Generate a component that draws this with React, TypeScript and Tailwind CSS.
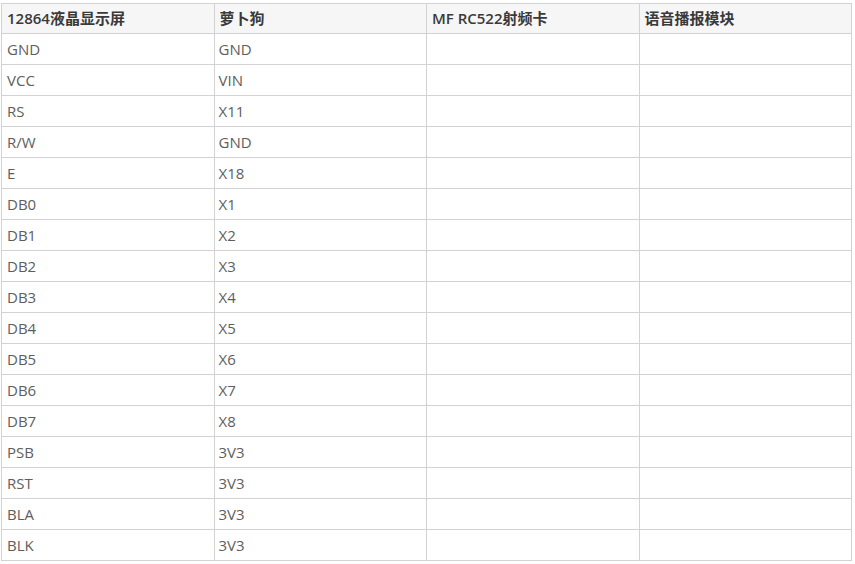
const rows: [string, string][] = [
  ['GND', 'GND'],
  ['VCC', 'VIN'],
  ['RS', 'X11'],
  ['R/W', 'GND'],
  ['E', 'X18'],
  ['DB0', 'X1'],
  ['DB1', 'X2'],
  ['DB2', 'X3'],
  ['DB3', 'X4'],
  ['DB4', 'X5'],
  ['DB5', 'X6'],
  ['DB6', 'X7'],
  ['DB7', 'X8'],
  ['PSB', '3V3'],
  ['RST', '3V3'],
  ['BLA', '3V3'],
  ['BLK', '3V3'],
];

const headers = ['12864液晶显示屏', '萝卜狗', 'MF RC522射频卡', '语音播报模块'];

export default function App() {
  return (
    <div className="min-h-screen bg-white pt-[3px] pl-[1px] font-['Open_Sans','Noto_Sans_CJK_SC',sans-serif]">
      <table className="w-[851px] table-fixed border-collapse text-[15px]">
        <thead>
          <tr className="bg-[#f6f6f6]">
            {headers.map((h) => (
              <th
                key={h}
                className="h-[30px] border border-[#d2d2d2] px-[5px] text-left font-semibold text-[#3a3a3a]"
              >
                {h}
              </th>
            ))}
          </tr>
        </thead>
        <tbody>
          {rows.map(([a, b], i) => (
            <tr key={i}>
              <td className="h-[31px] border border-[#d2d2d2] px-[5px] text-[#5e5e5e]">{a}</td>
              <td className="border border-[#d2d2d2] px-[4px] text-[#5e5e5e]">{b}</td>
              <td className="border border-[#d2d2d2]"></td>
              <td className="border border-[#d2d2d2]"></td>
            </tr>
          ))}
        </tbody>
      </table>
    </div>
  );
}
